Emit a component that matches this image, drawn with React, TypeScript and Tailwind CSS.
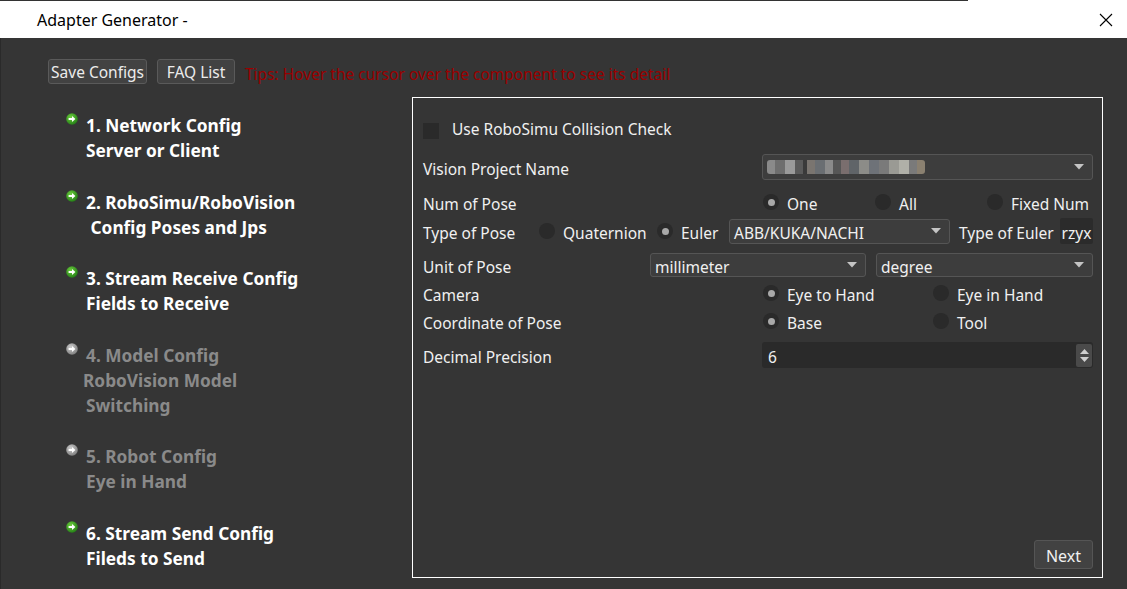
import React from "react";

const font = { fontFamily: '"Noto Sans", "Open Sans", sans-serif' };

function StepIcon({ active }: { active: boolean }) {
  return (
    <svg width="12" height="12" viewBox="0 0 12 12" className="shrink-0">
      <defs>
        <radialGradient id={active ? "ga" : "gd"} cx="40%" cy="35%" r="70%">
          <stop offset="0%" stopColor={active ? "#6fcf3f" : "#d0d0d0"} />
          <stop offset="100%" stopColor={active ? "#1f7a14" : "#7a7a7a"} />
        </radialGradient>
      </defs>
      <circle cx="6" cy="6" r="5.8" fill={`url(#${active ? "ga" : "gd"})`} />
      <path d="M2.6 5.1h3.4V3l3.4 3-3.4 3V6.9H2.6z" fill="#ffffff" />
    </svg>
  );
}

function Step({ active, lines, offsets }: { active: boolean; lines: string[]; offsets?: number[] }) {
  return (
    <div className="flex">
      <div className="w-[20px] -mt-[1px]">
        <StepIcon active={active} />
      </div>
      <div className={`flex flex-col font-bold text-[17.3px] leading-[25px] -mt-[1px] ${active ? "text-white" : "text-[#8a8a8a]"}`}>
        {lines.map((l, i) => (
          <div key={i} style={{ marginLeft: offsets ? offsets[i] : 0 }} className="whitespace-pre">
            {l}
          </div>
        ))}
      </div>
    </div>
  );
}

function Arrow() {
  return (
    <svg width="10" height="6" viewBox="0 0 10 6">
      <path d="M0 0h10L5 5.5z" fill="#c4c4c4" />
    </svg>
  );
}

function T({ children, className = "" }: { children: React.ReactNode; className?: string }) {
  return <span className={`inline-block pt-[4px] leading-[20px] ${className}`}>{children}</span>;
}

function Combo({ text, className }: { text?: React.ReactNode; className: string }) {
  return (
    <div className={`flex items-center justify-between rounded-[3px] border border-[#555555] bg-[#3d3d3d] pl-[4px] pr-[8px] ${className}`}>
      <div className="text-[15.5px] text-[#f0f0f0] flex items-center">{text}</div>
      <Arrow />
    </div>
  );
}

function Radio({ checked, label }: { checked?: boolean; label: string }) {
  return (
    <div className="flex items-center gap-[8px]">
      <div className="w-[16px] h-[16px] rounded-full bg-[#2a2a2a] flex items-center justify-center shrink-0">
        {checked && <div className="w-[7px] h-[7px] rounded-full bg-[#a9a9a9]" />}
      </div>
      <T className="text-[15.5px] text-[#f0f0f0]">{label}</T>
    </div>
  );
}

function Blurred() {
  const blocks = [
    ["#8a8a8a", 8], ["#6e6e6e", 10], ["#9a9a9a", 10], ["#5a5a5a", 8], ["#3a3a3a", 4],
    ["#7a7570", 8], ["#6a6e72", 10], ["#8a8a8a", 8], ["#565656", 8], ["#7a6e6e", 8],
    ["#606468", 10], ["#8c8c88", 10], ["#6e7278", 10], ["#7a7a7a", 10], ["#9a9a94", 10],
    ["#b0b0a8", 10], ["#7a7a7a", 8], ["#8a8070", 8],
  ] as [string, number][];
  return (
    <div className="flex h-[14px] rounded-[3px] overflow-hidden">
      {blocks.map(([c, w], i) => (
        <div key={i} style={{ backgroundColor: c, width: w }} className="h-full" />
      ))}
    </div>
  );
}

export default function App() {
  return (
    <div style={font} className="w-[1127px] h-[589px] overflow-hidden bg-[#353535] flex flex-col">
      <div className="bg-white h-[38px] shrink-0 flex flex-col">
        <div className="h-px w-[968px] bg-[#333333]" />
        <div className="flex-1 flex items-center justify-between pl-[37px] pr-[14px]">
          <span className="text-[16px] text-black">Adapter Generator -</span>
          <svg width="14" height="14" viewBox="0 0 14 14">
            <path d="M1 1l12 12M13 1L1 13" stroke="#000" strokeWidth="1.1" />
          </svg>
        </div>
      </div>
      <div className="flex-1 flex flex-col pl-[47px] pt-[21px] border-l border-[#2a2a2a]">
        <div className="flex items-center gap-[10px] h-[25px]">
          <button className="h-[25px] pt-[2px] rounded-[3px] border border-[#5a5a5a] bg-[#424242] text-[15.5px] text-[#ececec] leading-none w-[99px]">
            Save Configs
          </button>
          <button className="h-[25px] pt-[2px] rounded-[3px] border border-[#5a5a5a] bg-[#424242] text-[15.5px] text-[#ececec] leading-none w-[78px]">
            FAQ List
          </button>
          <T className="text-[15.5px] text-[#9a0000]">Tips: Hover the cursor over the component to see its detail</T>
        </div>
        <div className="flex mt-[13px]">
          <div className="w-[364px] pl-[18px] pt-[17px] flex flex-col gap-[27.5px]">
            <Step active lines={["1. Network Config", "Server or Client"]} />
            <Step active lines={["2. RoboSimu/RoboVision", " Config Poses and Jps"]} />
            <Step active lines={["3. Stream Receive Config", "Fields to Receive"]} />
            <Step active={false} lines={["4. Model Config", "RoboVision Model", "Switching"]} offsets={[0, -3, 0]} />
            <Step active={false} lines={["5. Robot Config", "Eye in Hand"]} />
            <Step active lines={["6. Stream Send Config", "Fileds to Send"]} />
          </div>
          <div className="w-[691px] h-[481px] border border-white flex flex-col pl-[10px] pr-[9px] pt-[17px] pb-[8px] text-[15.5px] text-[#f0f0f0]">
            <div className="h-[24px] flex items-center">
              <div className="w-[16px] h-[16px] bg-[#2a2a2a] mt-[8px]" />
              <T className="ml-[13px]">Use RoboSimu Collision Check</T>
            </div>
            <div className="h-[26px] flex items-center mt-[15px]">
              <T className="w-[339px]">Vision Project Name</T>
              <Combo className="flex-1 h-[26px]" text={<Blurred />} />
            </div>
            <div className="h-[24px] flex items-center mt-[10px]">
              <T className="w-[340px]">Num of Pose</T>
              <div className="w-[112px]"><Radio checked label="One" /></div>
              <div className="w-[112px]"><Radio label="All" /></div>
              <div><Radio label="Fixed Num" /></div>
            </div>
            <div className="h-[26px] flex items-center mt-[4px]">
              <T className="w-[116px]">Type of Pose</T>
              <div className="w-[118px]"><Radio label="Quaternion" /></div>
              <div className="w-[72px]"><Radio checked label="Euler" /></div>
              <Combo className="w-[221px] h-[25px]" text={<T>ABB/KUKA/NACHI</T>} />
              <T className="ml-[9px]">Type of Euler</T>
              <div className="ml-auto w-[33px] h-[26px] bg-[#2b2b2b] rounded-[2px] flex items-center justify-center"><T>rzyx</T></div>
            </div>
            <div className="h-[24px] flex items-center mt-[9px]">
              <T className="w-[227px]">Unit of Pose</T>
              <Combo className="w-[216px] h-[24px]" text={<T>millimeter</T>} />
              <Combo className="flex-1 ml-[10px] h-[24px]" text={<T>degree</T>} />
            </div>
            <div className="h-[24px] flex items-center mt-[4px]">
              <T className="w-[340px]">Camera</T>
              <div className="w-[170px]"><Radio checked label="Eye to Hand" /></div>
              <div><Radio label="Eye in Hand" /></div>
            </div>
            <div className="h-[24px] flex items-center mt-[4px]">
              <T className="w-[340px]">Coordinate of Pose</T>
              <div className="w-[170px]"><Radio checked label="Base" /></div>
              <div><Radio label="Tool" /></div>
            </div>
            <div className="h-[26px] flex items-center mt-[9px]">
              <T className="w-[339px]">Decimal Precision</T>
              <div className="flex-1 h-[26px] bg-[#2a2a2a] rounded-[3px] flex items-center justify-between pl-[6px] pr-[1px]">
                <T>6</T>
                <div className="w-[16px] h-[23px] bg-[#4a4a4a] rounded-[2px] flex flex-col items-center justify-center gap-[3px]">
                  <svg width="9" height="5" viewBox="0 0 9 5"><path d="M0 5h9L4.5 0z" fill="#d0d0d0" /></svg>
                  <svg width="9" height="5" viewBox="0 0 9 5"><path d="M0 0h9L4.5 5z" fill="#d0d0d0" /></svg>
                </div>
              </div>
            </div>
            <div className="mt-auto flex justify-end">
              <button className="w-[59px] h-[29px] pt-[2px] rounded-[3px] border border-[#555555] bg-[#424242] text-[16px] text-[#f0f0f0] leading-none">
                Next
              </button>
            </div>
          </div>
        </div>
      </div>
    </div>
  );
}
